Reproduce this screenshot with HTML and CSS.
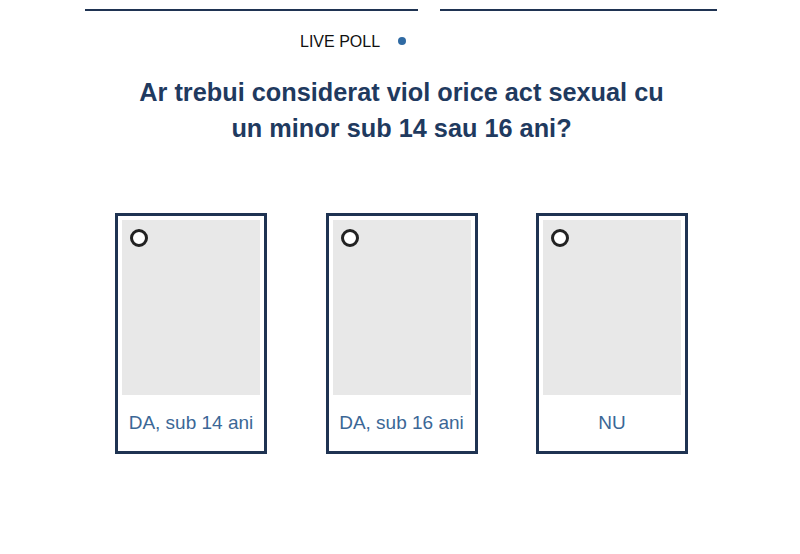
FILE: index.html
```html
<!DOCTYPE html>
<html lang="ro">
<head>
<meta charset="utf-8">
<title>Live Poll</title>
<link rel="stylesheet" href="styles.css">
</head>
<body>
<div class="page">
  <div class="rules">
    <span class="rule rule-left"></span>
    <span class="rule rule-right"></span>
  </div>
  <div class="live">
    <span class="live-label">LIVE POLL</span>
    <span class="live-dot"></span>
  </div>
  <h1 class="question">Ar trebui considerat viol orice act sexual cu<br>un minor sub 14 sau 16 ani?</h1>
  <div class="options">
    <div class="card">
      <div class="card-media"><span class="radio"></span></div>
      <div class="card-label">DA, sub 14 ani</div>
    </div>
    <div class="card">
      <div class="card-media"><span class="radio"></span></div>
      <div class="card-label">DA, sub 16 ani</div>
    </div>
    <div class="card">
      <div class="card-media"><span class="radio"></span></div>
      <div class="card-label">NU</div>
    </div>
  </div>
</div>
</body>
</html>
```

FILE: styles.css
```css
html, body {
  margin: 0;
  padding: 0;
  background: #ffffff;
}

body {
  font-family: "Liberation Sans", Arial, sans-serif;
  width: 800px;
  height: 554px;
  overflow: hidden;
}

.page {
  display: flex;
  flex-direction: column;
}

.rules {
  display: flex;
  padding-top: 9px;
  padding-left: 85px;
  gap: 22px;
}

.rule {
  display: block;
  height: 2px;
  background: #1f3352;
}

.rule-left {
  width: 333px;
}

.rule-right {
  width: 277px;
}

.live {
  display: flex;
  align-items: center;
  padding-left: 300px;
  margin-top: 21px;
  height: 20px;
}

.live-label {
  font-size: 16px;
  color: #111111;
}

.live-dot {
  width: 8px;
  height: 8px;
  border-radius: 50%;
  background: #2f6aa3;
  margin-left: 18px;
  margin-top: -2px;
}

.question {
  margin: 22px 0 0 0;
  font-size: 25.3px;
  line-height: 36px;
  font-weight: bold;
  color: #1f3a5f;
  text-align: center;
  padding-left: 3px;
}

.options {
  display: flex;
  gap: 58.5px;
  padding-left: 115px;
  margin-top: 67px;
}

.card {
  box-sizing: border-box;
  width: 152px;
  height: 241px;
  border: 3px solid #1f3352;
  padding: 4px;
  display: flex;
  flex-direction: column;
}

.card-media {
  height: 175px;
  background: #e8e8e8;
  position: relative;
}

.radio {
  position: absolute;
  left: 8px;
  top: 9px;
  width: 12px;
  height: 12px;
  border: 3px solid #222222;
  border-radius: 50%;
  background: #ffffff;
}

.card-label {
  flex: 1;
  display: flex;
  align-items: center;
  justify-content: center;
  font-size: 19px;
  color: #3b6796;
  padding-top: 3px;
}
```
